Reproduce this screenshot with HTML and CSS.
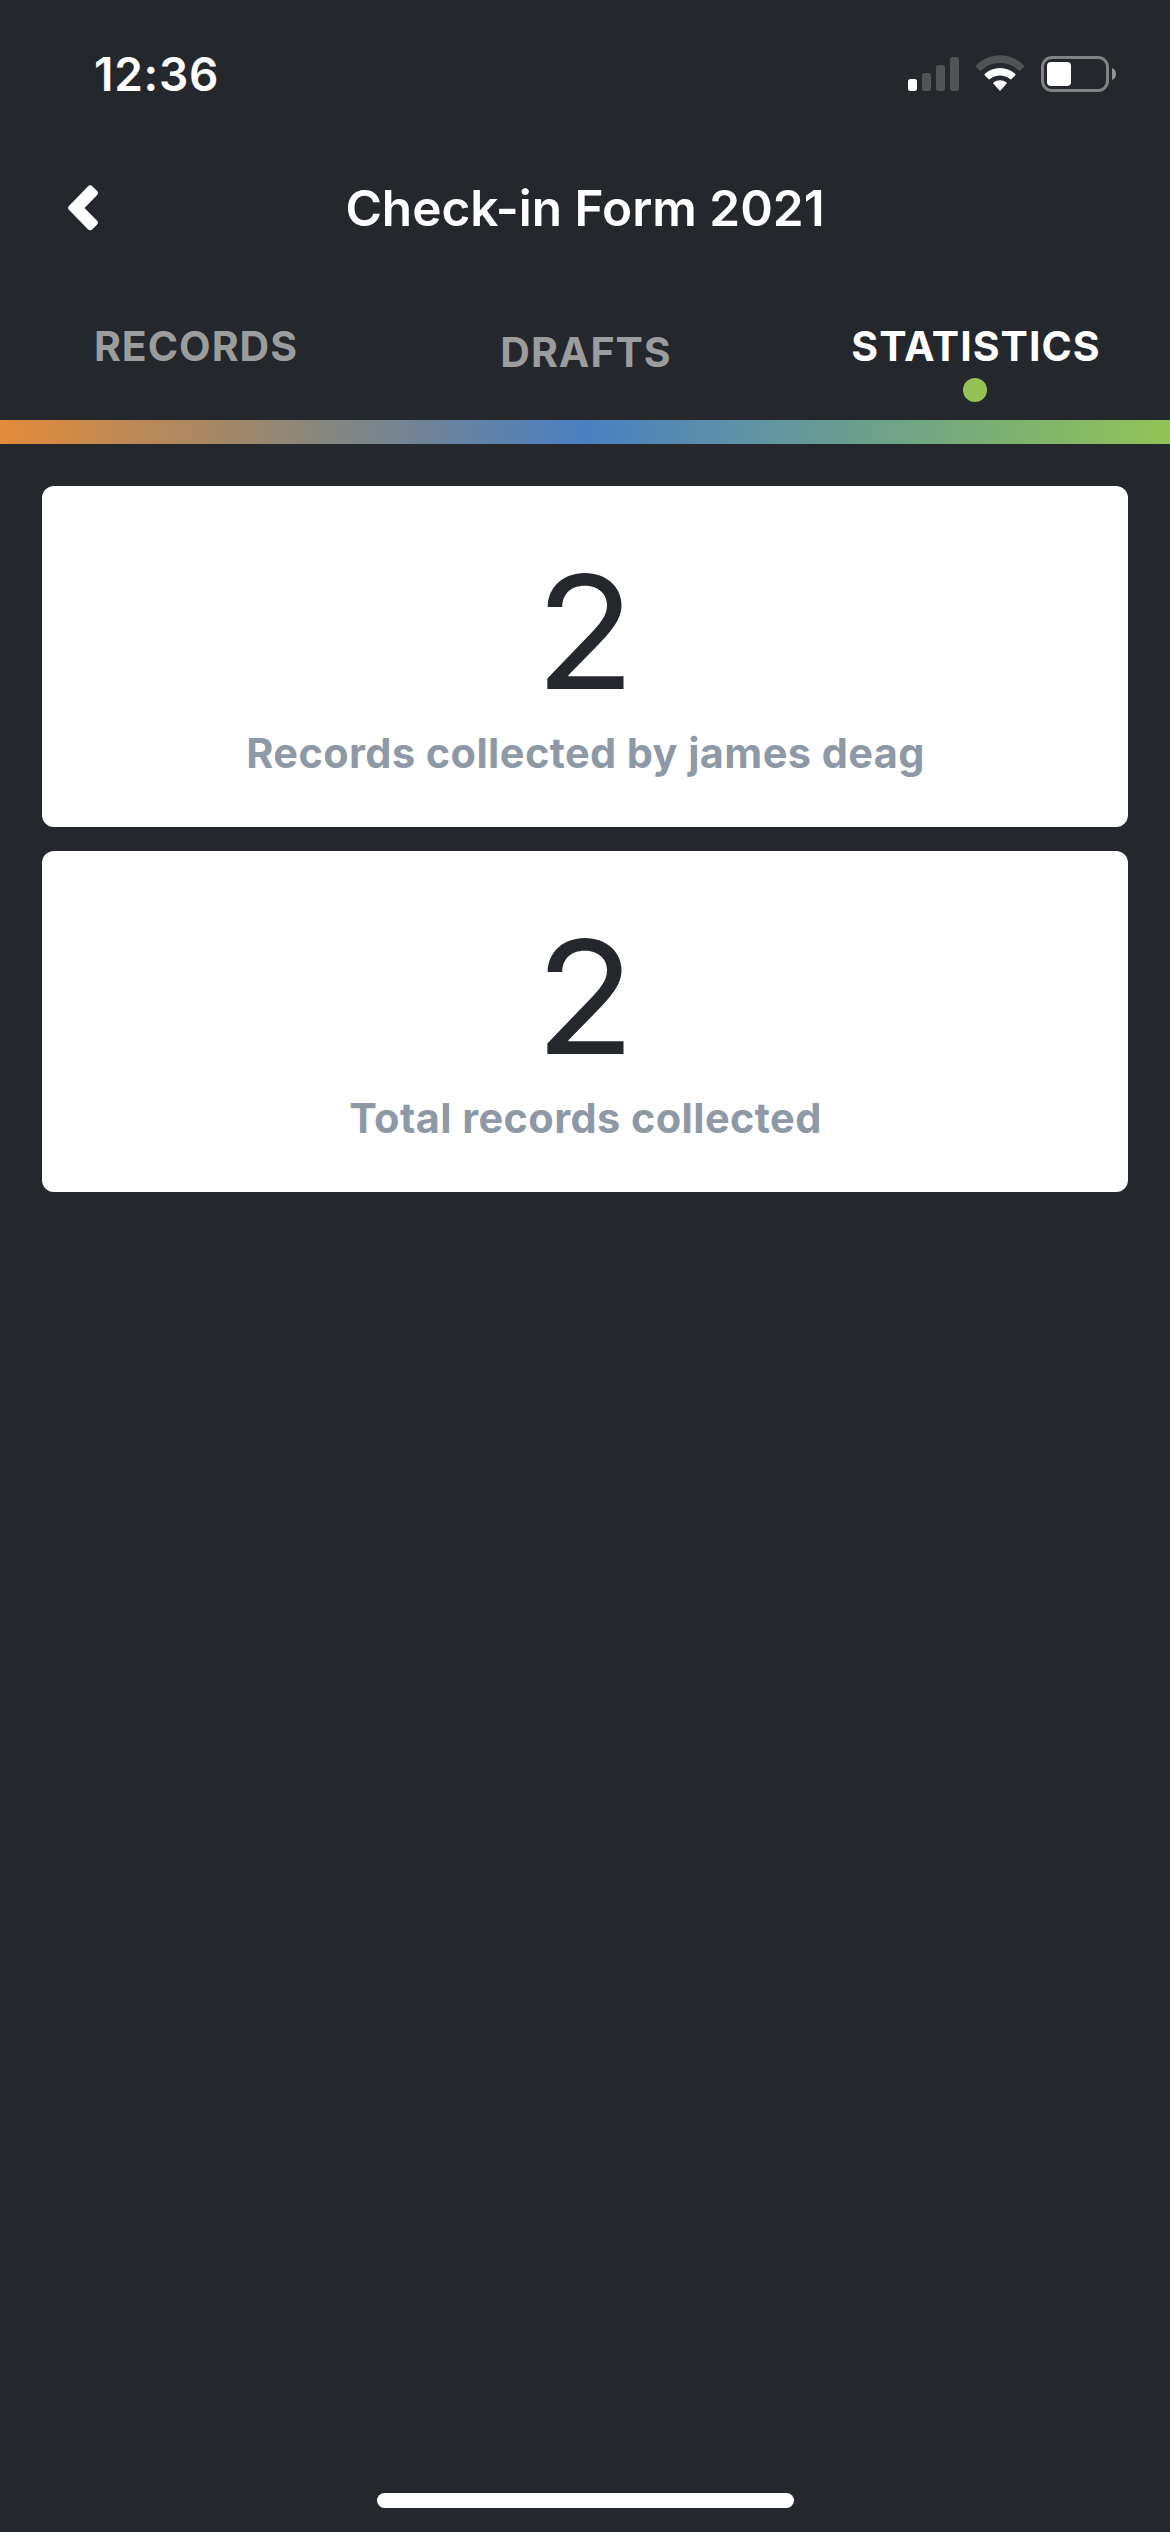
FILE: index.html
```html
<!DOCTYPE html>
<html lang="en">
<head>
<meta charset="utf-8">
<title>Check-in Form 2021</title>
<link rel="stylesheet" href="styles.css">
</head>
<body>
<div class="screen">
  <header class="status">
    <span class="time">12:36</span>
    <svg class="status-icons" width="208" height="36" viewBox="0 0 208 36">
      <rect x="0" y="23" width="9" height="12" rx="2.5" fill="#fff"/>
      <g fill="#505456">
        <rect x="14" y="17" width="9" height="18" rx="2.5"/>
        <rect x="28" y="9" width="9" height="26" rx="2.5"/>
        <rect x="42" y="1" width="9" height="34" rx="2.5"/>
      </g>
      <path fill="#505456" d="M68.3 9.2C75 2.700 83.500-.7 92-.7S109 2.700 115.700 9.200Q116.700 10.200 115.700 11.200L112 14.700Q111.500 15.200 111 14.700C105.700 9.700 99 7 92 7S78.300 9.700 73 14.700Q72.500 15.200 72 14.700L68.300 11.200Q67.300 10.200 68.300 9.200Z"/>
      <path fill="#fff" d="M76.900 17.700C81.100 14 86.400 11.900 92 11.900S102.900 14 107.100 17.700Q108.100 18.600 107.100 19.600L103.500 23.100Q102.800 23.700 102 23.100C99.200 20.800 95.800 19.500 92 19.500S84.800 20.800 82 23.100Q81.200 23.700 80.500 23.100L76.900 19.600Q75.900 18.600 76.900 17.700Z"/>
      <path fill="#fff" d="M85.700 26.200C87.500 24.900 89.600 24.200 92 24.200S96.500 24.900 98.300 26.200Q99.200 27 98.300 27.900L92.700 34.300Q92 35.100 91.300 34.300L85.700 27.900Q84.800 27 85.700 26.200Z"/>
      <rect x="134.500" y="1.500" width="65" height="33" rx="9.500" fill="none" stroke="#808284" stroke-width="3"/>
      <rect x="139" y="6" width="24" height="24" rx="4" fill="#fff"/>
      <path fill="#929395" d="M204 12Q208 13.500 208 18T204 24Z"/>
    </svg>
  </header>
  <nav class="titlebar">
    <svg class="back" width="30" height="46" viewBox="0 0 30 46">
      <path fill="#fff" d="M.9 21.100L19.900 1.400Q22.200-.8 24.500 1.400L28.900 5.800Q31.100 8 28.900 10.200L16.500 23L28.900 35.400Q31.100 37.600 28.900 39.800L24.500 44.200Q22.200 46.400 19.900 44.200L.9 24.700Q-.8 22.900.9 21.100Z"/>
    </svg>
    <h1 class="title">Check-in Form 2021</h1>
  </nav>
  <div class="tabs">
    <div class="tab"><span class="tab-label">RECORDS</span></div>
    <div class="tab tab-middle"><span class="tab-label">DRAFTS</span></div>
    <div class="tab tab-active"><span class="tab-label">STATISTICS</span><i class="dot"></i></div>
  </div>
  <div class="rainbow"></div>
  <main class="cards">
    <section class="card">
      <div class="number">2</div>
      <div class="caption">Records collected by james deag</div>
    </section>
    <section class="card">
      <div class="number">2</div>
      <div class="caption">Total records collected</div>
    </section>
  </main>
  <div class="home"></div>
</div>
</body>
</html>
```
FILE: styles.css
```css
* { box-sizing: border-box; }
body { margin: 0; background: #24272c; color: #fff; font-family: Inter, "Liberation Sans", sans-serif; }
.screen { height: 2532px; display: flex; flex-direction: column; overflow: hidden; }
.status { height: 148px; padding: 0 54px 0 94px; display: flex; align-items: center; justify-content: space-between; }
.time { font-size: 46px; line-height: 48px; font-weight: 600; letter-spacing: 0.75px; }
.status-icons { overflow: visible; }
.titlebar { height: 120px; display: grid; grid-template-columns: 30px 1fr 30px; align-items: center; padding: 0 68px; }
.title { margin: 0; text-align: center; font-size: 49.500px; line-height: 60px; font-weight: 600; }
.tabs { height: 152px; display: grid; grid-template-columns: repeat(3, 1fr); padding-top: 54px; }
.tab { display: flex; flex-direction: column; align-items: center; }
.tab-middle { padding-top: 6px; }
.tab-label { padding-left: 2px; font-size: 41px; line-height: 49px; font-weight: 650; letter-spacing: 1px; color: #9b9c9d; }
.tab-active .tab-label { color: #fff; }
.dot { width: 24px; height: 24px; margin-top: 7px; border-radius: 50%; background: #96c255; }
.rainbow { height: 24px; background: linear-gradient(90deg, #e38c3a, #85867f 28%, #4a80c2 50%, #93c353); }
.cards { display: flex; flex-direction: column; gap: 24px; padding: 42px 42px 0; }
.card { height: 341px; padding-top: 51px; border-radius: 12px; background: #fff; text-align: center; }
.number { font-size: 158px; line-height: 190px; color: #24272c; transform: scaleX(1.04); }
.caption { padding-left: 1px; font-size: 41.500px; line-height: 53px; font-weight: 700; letter-spacing: 0.4px; color: #8f99a6; }
.home { width: 417px; height: 15px; margin: auto auto 24px; border-radius: 8px; background: #fff; }
```
